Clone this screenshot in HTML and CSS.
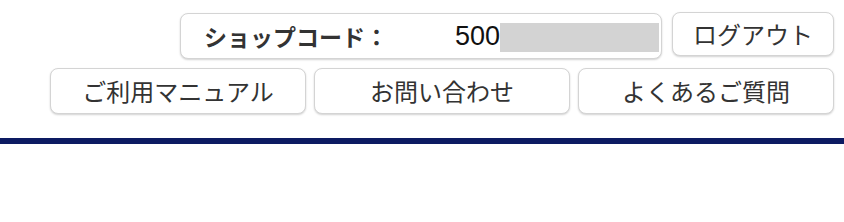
FILE: index.html
```html
<!DOCTYPE html>
<html lang="ja">
<head>
    <meta charset="UTF-8">
    <meta name="viewport" content="width=device-width, initial-scale=1.0">
    <title>ショップ</title>
    <link rel="stylesheet" href="styles.css">
</head>
<body>

<header class="header">
    <div class="header-row">
        <div class="shop-box">
            <span class="shop-label">ショップコード：</span>
            <span class="shop-code">500</span>
            <span class="shop-mask"></span>
        </div>
        <a class="btn btn-logout" href="#">ログアウト</a>
    </div>
    <nav class="header-row nav-row">
        <a class="btn btn-nav" href="#">ご利用マニュアル</a>
        <a class="btn btn-nav" href="#">お問い合わせ</a>
        <a class="btn btn-nav" href="#">よくあるご質問</a>
    </nav>
</header>

<div class="header-line"></div>

</body>
</html>
```

FILE: styles.css
```css
* {
    margin: 0;
    padding: 0;
    box-sizing: border-box;
}

html, body {
    width: 100%;
    height: 100%;
    background-color: #fff;
    font-family: "Noto Sans CJK JP", "Noto Sans", sans-serif;
    color: #333;
}

a {
    color: #333;
    text-decoration: none;
}

.header {
    padding: 12px 10px 0 0;
    display: flex;
    flex-direction: column;
    gap: 9px;
}

.header-row {
    display: flex;
    justify-content: flex-end;
    gap: 10px;
}

.nav-row {
    gap: 8px;
}

.shop-box,
.btn {
    height: 46px;
    background: #fff;
    border: 1px solid #d4d4d4;
    border-radius: 8px;
    box-shadow: 0 1px 2px rgba(0, 0, 0, 0.18);
}

.shop-box {
    width: 482px;
    display: flex;
    align-items: center;
    padding: 0 2px 0 23px;
    margin-top: 1px;
}

.shop-label {
    font-size: 23px;
    font-weight: bold;
}

.shop-code {
    margin-left: 67px;
    font-family: "Liberation Sans", Arial, sans-serif;
    font-size: 27px;
    color: #111;
}

.shop-mask {
    flex: 1;
    height: 29px;
    background: #d3d3d3;
    margin-top: 2px;
}

.btn {
    display: flex;
    align-items: center;
    justify-content: center;
    font-size: 24px;
    padding-bottom: 1px;
}

.btn-logout {
    width: 162px;
    height: 44px;
}

.btn-nav {
    width: 256px;
}

.header-line {
    margin-top: 24px;
    height: 6px;
    background: #0d1b62;
}
```
